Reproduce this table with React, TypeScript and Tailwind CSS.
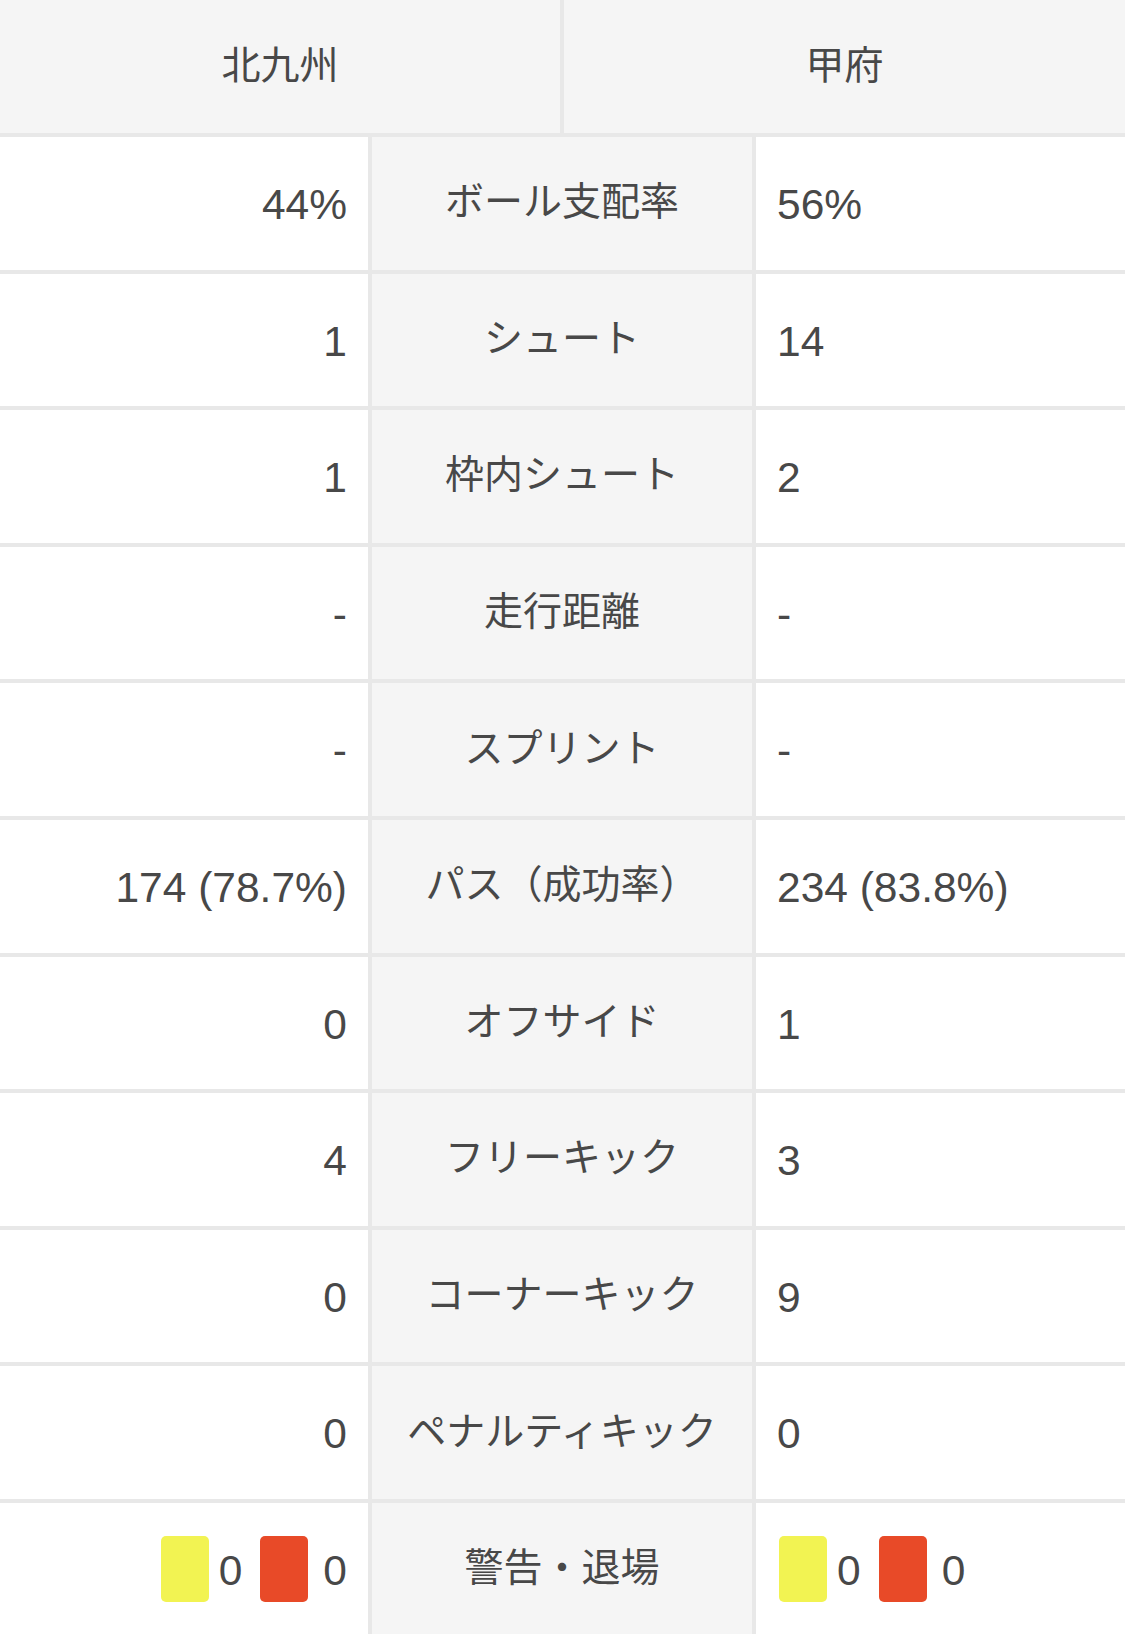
import React from "react";

type Row = { label: string; home: React.ReactNode; away: React.ReactNode };

const Cards = ({ y, r }: { y: string; r: string }) => (
  <div className="flex items-center">
    <span className="block w-[48px] h-[66px] rounded-[5px] bg-[#f2f352]" />
    <span className="ml-[10px] mr-[18px] pt-[4px]">{y}</span>
    <span className="block w-[48px] h-[66px] rounded-[5px] bg-[#e84a28]" />
    <span className="ml-[15px] pt-[4px]">{r}</span>
  </div>
);

const rows: Row[] = [
  { label: "ボール支配率", home: "44%", away: "56%" },
  { label: "シュート", home: "1", away: "14" },
  { label: "枠内シュート", home: "1", away: "2" },
  { label: "走行距離", home: "-", away: "-" },
  { label: "スプリント", home: "-", away: "-" },
  { label: "パス（成功率）", home: "174 (78.7%)", away: "234 (83.8%)" },
  { label: "オフサイド", home: "0", away: "1" },
  { label: "フリーキック", home: "4", away: "3" },
  { label: "コーナーキック", home: "0", away: "9" },
  { label: "ペナルティキック", home: "0", away: "0" },
  { label: "警告・退場", home: <Cards y="0" r="0" />, away: <Cards y="0" r="0" /> },
];

const numFont = { fontFamily: '"Liberation Sans", Arial, sans-serif' };

export default function App() {
  return (
    <div
      className="w-[1125px] bg-white text-[#484848] text-[39px] leading-none"
      style={{ fontFamily: '"Noto Sans CJK JP", "Noto Sans", sans-serif' }}
    >
      <div className="flex h-[137px] bg-[#f5f5f5] border-b-4 border-[#e8e8e8]">
        <div className="w-[560px] flex items-center justify-center border-r-4 border-[#e8e8e8] box-content pb-[8px]">
          北九州
        </div>
        <div className="flex-1 flex items-center justify-center pb-[8px]">甲府</div>
      </div>
      {rows.map((row, i) => {
        const isCards = i === rows.length - 1;
        return (
          <div
            key={i}
            className={
              !isCards
                ? "flex h-[136.6px] border-b-4 border-[#e8e8e8]"
                : "flex h-[132.6px]"
            }
          >
            <div
              className={
                isCards
                  ? "w-[368px] flex items-center justify-end pr-[21px] text-[42.5px]"
                  : "w-[368px] flex items-center justify-end pr-[21px] pt-[4px] text-[42.5px]"
              }
              style={numFont}
            >
              {row.home}
            </div>
            <div className="w-[388px] flex items-center justify-center bg-[#f5f5f5] border-x-4 border-[#e8e8e8] pb-[9px]">
              {row.label}
            </div>
            <div
              className={
                isCards
                  ? "flex-1 flex items-center justify-start pl-[23px] text-[42.5px]"
                  : "flex-1 flex items-center justify-start pl-[21px] pt-[4px] text-[42.5px]"
              }
              style={numFont}
            >
              {row.away}
            </div>
          </div>
        );
      })}
    </div>
  );
}
